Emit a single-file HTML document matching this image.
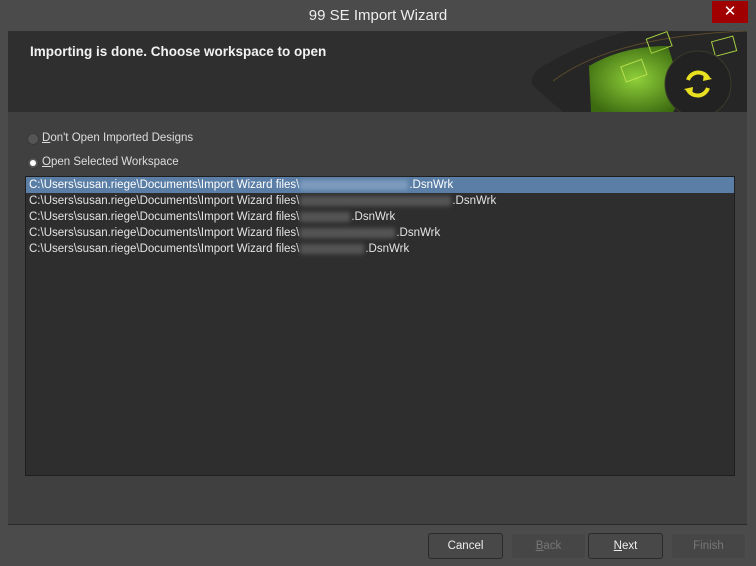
<!DOCTYPE html>
<html><head><meta charset="utf-8"><style>
*{margin:0;padding:0;box-sizing:border-box}
body{width:756px;height:566px;background:#4b4b4b;font-family:"Liberation Sans","DejaVu Sans",sans-serif;position:relative;overflow:hidden;color:#e6e6e6}
.title{position:absolute;top:0;left:0;width:756px;height:31px;text-align:center;line-height:32px;font-size:15px;color:#eee}
.close{position:absolute;left:712px;top:1px;width:36px;height:22px;background:#a00000;color:#fff;font-size:15px;line-height:22px;text-align:center;font-weight:bold}
.header{position:absolute;left:8px;top:31px;width:739px;height:81px;background:#2f2f2f;overflow:hidden}
.header h1{position:absolute;left:22px;top:13px;font-size:13.5px;font-weight:bold;color:#f2f2f2}
.panel{position:absolute;left:8px;top:112px;width:739px;height:413px;background:#404040;border-bottom:1px solid #2a2a2a}
.radio{position:absolute;left:19px;font-size:11.5px;color:#ddd}
.radio i{position:absolute;left:0;top:1px;width:12px;height:12px;border-radius:50%;background:#555;border:1px solid #3a3a3a}
.radio span{position:absolute;left:15px;top:0;white-space:nowrap}
.radio i.on::after{content:"";position:absolute;left:2px;top:2px;width:6px;height:6px;border-radius:50%;background:#fff}
.list{position:absolute;left:17px;top:64px;width:710px;height:300px;background:#2e2e2e;border:1px solid #1e1e1e}
.row{height:16px;line-height:16px;font-size:11.5px;padding-left:3px;color:#e4e4e4;white-space:nowrap;display:flex;align-items:center}
.row.sel{background:#5a7ea6;color:#fff}
.blur{display:inline-block;height:10px;background:#555;filter:blur(2px);margin:0 1px}
.sel .blur{background:#7d9bbd}
.btn{position:absolute;top:533px;width:75px;height:26px;border:1px solid #2a2a2a;border-radius:3px;background:#484848;font-size:11.5px;text-align:center;line-height:24px;color:#eee}
.btn.dis{color:#777;border-color:#4c4c4c;background:#464646}
u{text-decoration:underline}
</style></head><body>
<div class="title">99 SE Import Wizard</div>
<div class="close">✕</div>
<div class="header"><h1>Importing is done. Choose workspace to open</h1>
<svg style="position:absolute;left:515px;top:0" width="224" height="81" viewBox="0 0 224 81">
<defs><radialGradient id="g" cx="0.5" cy="0.5" r="0.6"><stop offset="0" stop-color="#8fd03a"/><stop offset="1" stop-color="#3c6a10"/></radialGradient></defs>
<path d="M40 81 L10 55 Q5 45 20 35 Q80 0 140 -5 L224 -5 L224 81Z" fill="#262626"/>
<path d="M30 50 Q90 5 224 0" stroke="#5a4a2a" fill="none" stroke-width="1"/>
<path d="M68 81 L66 35 Q100 15 145 15 L160 65 L150 81Z" fill="url(#g)"/>
<rect x="100" y="32" width="22" height="16" fill="none" stroke="#b7e050" transform="rotate(-20 110 40)"/>
<rect x="125" y="4" width="22" height="15" fill="none" stroke="#a6d040" transform="rotate(-20 136 11)"/>
<rect x="190" y="8" width="22" height="15" fill="none" stroke="#a6d040" transform="rotate(-15 200 15)"/>
<circle cx="175" cy="53" r="33" fill="#222" stroke="#3a3a2a"/>
<path d="M165 49 A11 11 0 0 1 185 47" stroke="#e8e020" stroke-width="4" fill="none"/>
<path d="M185 57 A11 11 0 0 1 165 59" stroke="#e8e020" stroke-width="4" fill="none"/>
<path d="M181 42 L189 48 L180 50Z M169 64 L161 58 L170 56Z" fill="#e8e020"/>
</svg></div>
<div class="panel">
<div class="radio" style="top:20px"><i></i><span><u>D</u>on't Open Imported Designs</span></div>
<div class="radio" style="top:44px"><i class="on"></i><span><u>O</u>pen Selected Workspace</span></div>
<div class="list">
<div class="row sel">C:\Users\susan.riege\Documents\Import Wizard files\<span class="blur" style="width:108px"></span>.DsnWrk</div>
<div class="row">C:\Users\susan.riege\Documents\Import Wizard files\<span class="blur" style="width:151px"></span>.DsnWrk</div>
<div class="row">C:\Users\susan.riege\Documents\Import Wizard files\<span class="blur" style="width:50px"></span>.DsnWrk</div>
<div class="row">C:\Users\susan.riege\Documents\Import Wizard files\<span class="blur" style="width:95px"></span>.DsnWrk</div>
<div class="row">C:\Users\susan.riege\Documents\Import Wizard files\<span class="blur" style="width:64px"></span>.DsnWrk</div>
</div>
</div>
<div class="btn" style="left:428px">Cancel</div>
<div class="btn dis" style="left:511px"><u>B</u>ack</div>
<div class="btn" style="left:588px"><u>N</u>ext</div>
<div class="btn dis" style="left:671px">Finish</div>
</body></html>
